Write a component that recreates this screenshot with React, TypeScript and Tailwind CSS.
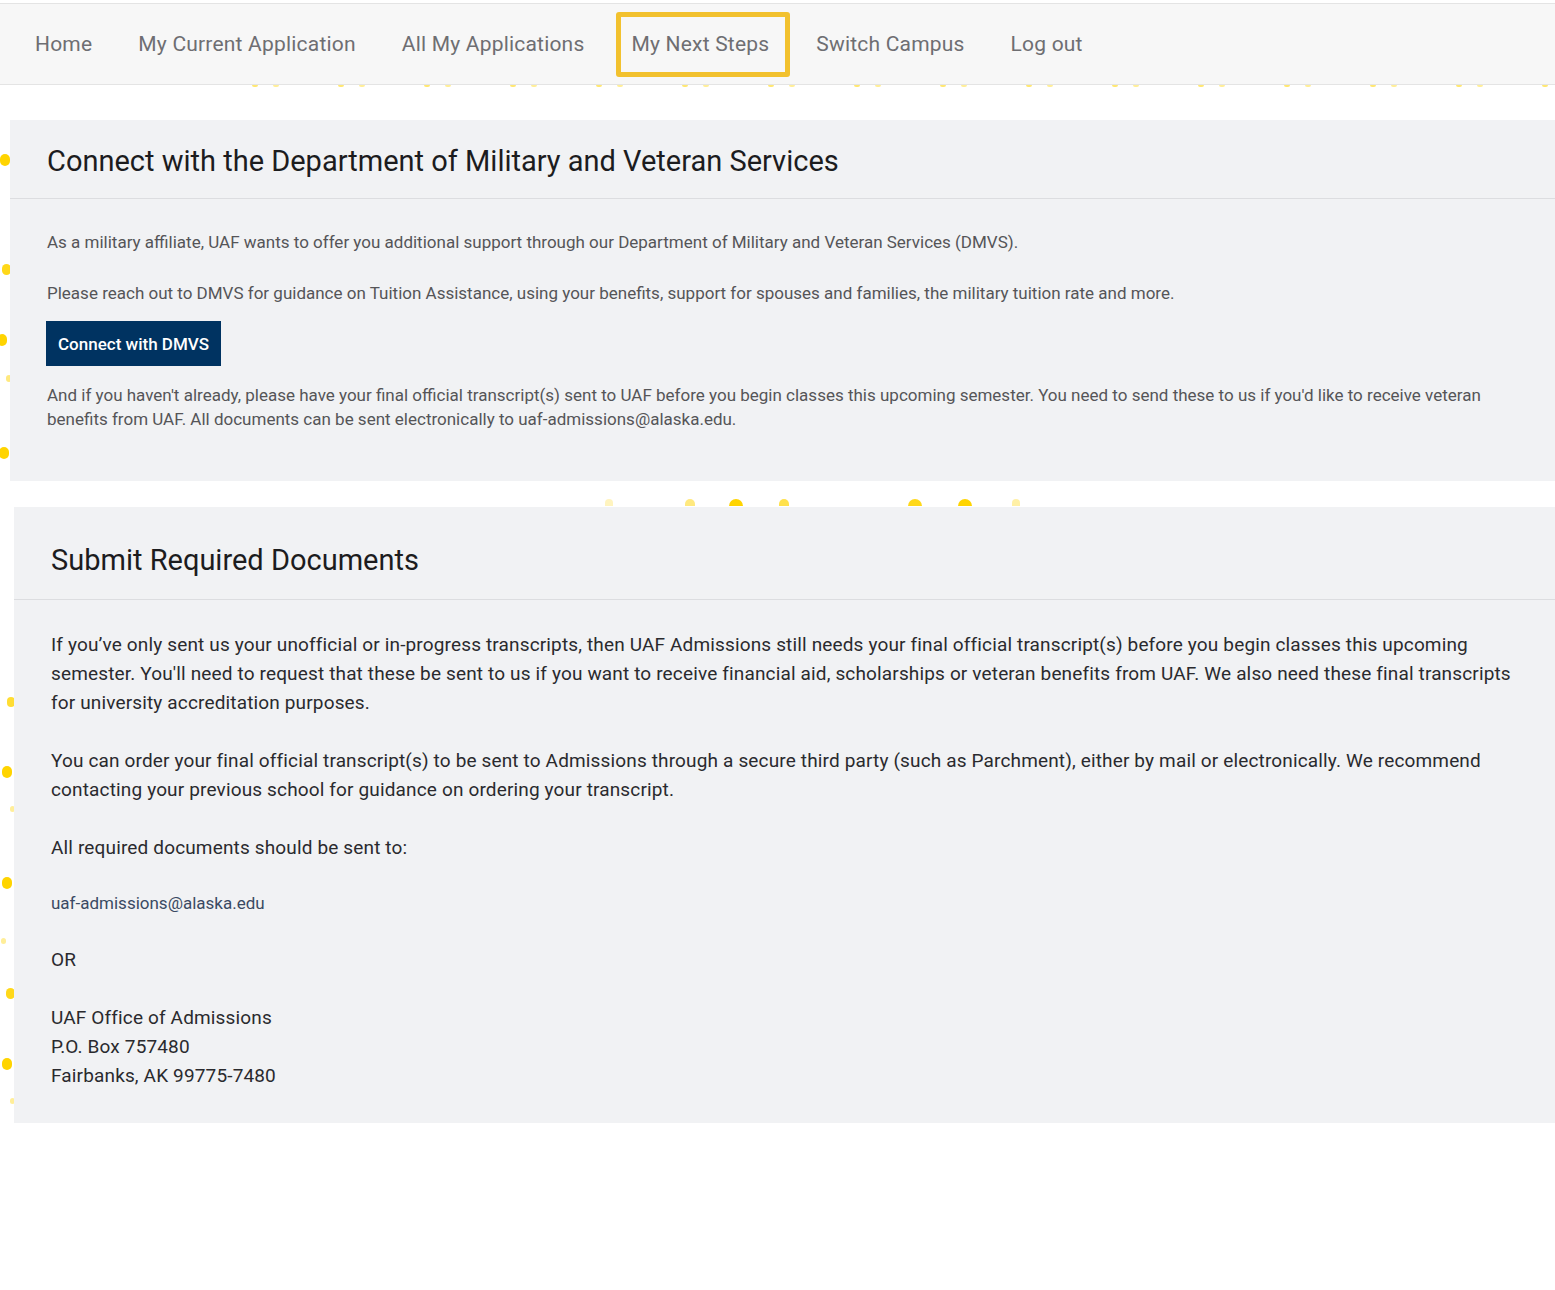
import React from "react";

const navItems = ["Home", "My Current Application", "All My Applications", "My Next Steps", "Switch Campus", "Log out"];

const sideDots: { x: number; y: number; s: number; o: number }[] = [
  { x: 0, y: 154, s: 10, o: 1 },
  { x: 2, y: 264, s: 9, o: 0.9 },
  { x: -3, y: 334, s: 10, o: 1 },
  { x: 6, y: 375, s: 6, o: 0.5 },
  { x: -1, y: 447, s: 10, o: 1 },
  { x: 7, y: 697, s: 8, o: 0.8 },
  { x: 2, y: 766, s: 10, o: 1 },
  { x: 10, y: 806, s: 5, o: 0.4 },
  { x: 2, y: 877, s: 10, o: 1 },
  { x: 1, y: 938, s: 5, o: 0.4 },
  { x: 6, y: 988, s: 9, o: 0.9 },
  { x: 2, y: 1058, s: 10, o: 1 },
  { x: 10, y: 1098, s: 5, o: 0.4 },
];

const navDots: { x: number; o: number }[] = [];
for (let k = 0; k < 16; k++) {
  const base = 252 + k * 86;
  navDots.push({ x: base, o: 0.55 });
  navDots.push({ x: base + 21, o: 0.4 });
}

const midDots = [
  { x: 729, w: 14, o: 1 },
  { x: 779, w: 10, o: 0.7 },
  { x: 685, w: 10, o: 0.5 },
  { x: 908, w: 14, o: 0.9 },
  { x: 958, w: 14, o: 1 },
  { x: 1012, w: 8, o: 0.35 },
  { x: 605, w: 8, o: 0.25 },
];

export default function App() {
  return (
    <div className="relative min-h-[1290px] w-[1555px] bg-white overflow-hidden" style={{ fontFamily: "Roboto, 'Liberation Sans', sans-serif" }}>
      {sideDots.map((d, i) => (
        <span
          key={"s" + i}
          className="absolute rounded-full bg-[#ffd400]"
          style={{ left: d.x, top: d.y, width: d.s, height: d.s * 1.2, opacity: d.o }}
        />
      ))}
      {navDots.map((d, i) => (
        <span
          key={"n" + i}
          className="absolute h-[2px] w-[6px] rounded-b-full bg-[#ffd400] top-[85px]"
          style={{ left: d.x, opacity: d.o }}
        />
      ))}
      {midDots.map((d, i) => (
        <span
          key={"m" + i}
          className="absolute h-[7px] rounded-t-full bg-[#ffd400] top-[499px]"
          style={{ left: d.x, width: d.w, opacity: d.o }}
        />
      ))}

      <div className="h-[3px] bg-white" />
      <nav className="relative h-[82px] bg-[#f7f7f7] border-t border-b border-[#e4e4e4] flex items-center pl-[35px] pt-[2px] gap-[46px]">
        {navItems.map((item) =>
          item === "My Next Steps" ? (
            <div
              key={item}
              className="-ml-[14px] -mr-[20px] -mt-[2px] h-[65px] pl-[10px] pr-[16px] pt-[2px] flex items-center border-[5px] border-[#f2c12e] rounded-[3px] text-[21px] text-[#6e6e72] tracking-[0.2px]"
            >
              {item}
            </div>
          ) : (
            <div key={item} className="text-[21px] text-[#6e6e72] tracking-[0.2px]">
              {item}
            </div>
          )
        )}
      </nav>

      <section className="relative mt-[35px] ml-[10px] bg-[#f1f2f4] pb-[50px]">
        <div className="h-[79px] border-b border-[#dcdde0] flex items-center pl-[37px] pt-[6px]">
          <h2 className="text-[29px] text-[#1c1c1e]">Connect with the Department of Military and Veteran Services</h2>
        </div>
        <div className="pl-[37px] pr-[60px] pt-[31px] text-[17px] text-[#555558] leading-[24px]">
          <p>As a military affiliate, UAF wants to offer you additional support through our Department of Military and Veteran Services (DMVS).</p>
          <p className="mt-[27px]">
            Please reach out to DMVS for guidance on Tuition Assistance, using your benefits, support for spouses and families, the military tuition rate and more.
          </p>
          <button className="-ml-[1px] mt-[16px] h-[45px] px-[12px] bg-[#003361] text-white text-[17px] font-medium">Connect with DMVS</button>
          <p className="mt-[17px]">
            And if you haven't already, please have your final official transcript(s) sent to UAF before you begin classes this upcoming semester. You need to send these to us if you'd like to receive veteran benefits from UAF. All documents can be sent electronically to uaf-admissions@alaska.edu.
          </p>
        </div>
      </section>

      <section className="relative mt-[26px] ml-[14px] bg-[#f1f2f4] pb-[33px]">
        <div className="h-[93px] border-b border-[#dcdde0] flex items-center pl-[37px] pt-[16px]">
          <h2 className="text-[29px] text-[#1c1c1e]">Submit Required Documents</h2>
        </div>
        <div className="pl-[37px] pr-[30px] pt-[30px] text-[19px] tracking-[0.15px] text-[#2a2a2e] leading-[29px]">
          <p>
            If you’ve only sent us your unofficial or in-progress transcripts, then UAF Admissions still needs your final official transcript(s) before you begin classes this upcoming semester. You'll need to request that these be sent to us if you want to receive financial aid, scholarships or veteran benefits from UAF. We also need these final transcripts for university accreditation purposes.
          </p>
          <p className="mt-[29px]">
            You can order your final official transcript(s) to be sent to Admissions through a secure third party (such as Parchment), either by mail or electronically. We recommend contacting your previous school for guidance on ordering your transcript.
          </p>
          <p className="mt-[29px]">All required documents should be sent to:</p>
          <p className="mt-[27px] text-[17px] tracking-normal text-[#3a4a63]">uaf-admissions@alaska.edu</p>
          <p className="mt-[27px]">OR</p>
          <p className="mt-[29px]">
            UAF Office of Admissions
            <br />
            P.O. Box 757480
            <br />
            Fairbanks, AK 99775-7480
          </p>
        </div>
      </section>
    </div>
  );
}
